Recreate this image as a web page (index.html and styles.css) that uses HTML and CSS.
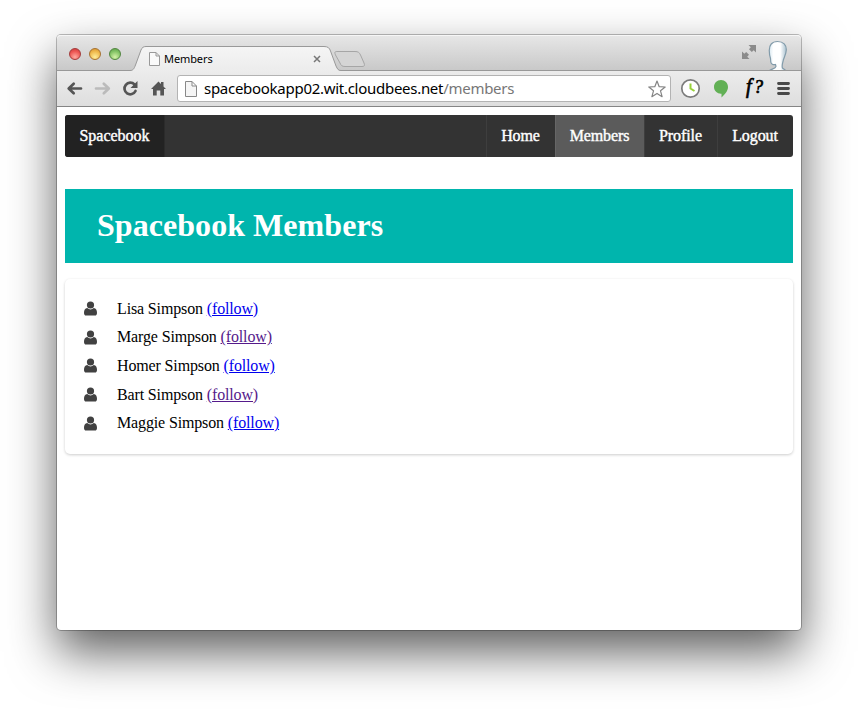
FILE: index.html
```html
<!DOCTYPE html>
<html lang="en">
<head>
<meta charset="utf-8">
<title>Members</title>
<link rel="stylesheet" href="styles.css">
</head>
<body>
<div class="window">
  <header class="tabstrip">
    <div class="lights"><i class="light red"></i><i class="light amber"></i><i class="light green"></i></div>
    <div class="tab">
      <svg class="tab-shape" width="250" height="36" viewBox="0 0 250 36">
        <defs><linearGradient id="tabfill" x1="0" y1="0" x2="0" y2="1"><stop offset="0" stop-color="#f5f5f5"/><stop offset="1" stop-color="#ececec"/></linearGradient></defs>
        <path d="M0 36V35.500H1C4 35.500 5 34 6.500 30L12 15C13 12.500 14.500 11.500 17 11.500H195C199 11.500 200.500 13 201.500 16L207 31C208.500 34 209 35.500 212 35.500V36Z" fill="url(#tabfill)"/>
        <path d="M0 35.500H1C4 35.500 5 34 6.500 30L12 15C13 12.500 14.500 11.500 17 11.500H195C199 11.500 200.500 13 201.500 16L207 31C208.500 34 209 35.500 212 35.500" fill="none" stroke="#999"/>
        <path d="M208 16.500H226C229 16.500 230.500 17.500 231.500 20L235 28C236 30.500 235.500 31.500 233 31.500H216C213 31.500 212 30.500 211 28L206.500 20C205.500 17.500 205.500 16.500 208 16.500Z" fill="#d5d5d5" stroke="#a6a6a6"/>
      </svg>
      <svg class="tab-page" width="12" height="15" viewBox="0 0 12 15"><path d="M.5.5H7L10.500 4V13.500H.5ZM7 .5V4H10.500" fill="#fafafa" stroke="#999"/></svg>
      <span class="tab-title">Members</span>
      <svg class="tab-close" width="8" height="8" viewBox="0 0 8 8"><path d="M1 1L7 7M7 1L1 7" stroke="#777" stroke-width="1.500"/></svg>
    </div>
    <div class="strip-end">
      <svg class="expand" width="16" height="16" viewBox="0 0 16 16" fill="#8b8b8b"><path d="M7.500 1H15V8.500L12.700 6.200L10.800 8L8 5.200L9.800 3.300ZM1 7.500L3.300 9.800L5.200 8L8 10.800L6.200 12.700L8.500 15H1Z"/></svg>
      <svg class="avatar" width="22" height="30" viewBox="0 0 22 30">
        <defs><linearGradient id="face"><stop offset="0" stop-color="#d8e8f1"/><stop offset=".25" stop-color="#fff"/><stop offset=".65" stop-color="#fff"/><stop offset="1" stop-color="#a9c1cf"/></linearGradient></defs>
        <path d="M2 31C3.500 29 8.500 29 9 26.500L8.500 24.500C6 25 4 24 3.800 22L3.500 18.500C2.700 16 2.300 14 2.300 11C2 5 5 1.500 10.500 1.500C16.500 1.500 19.500 5 19.300 10C19 14.500 17.500 16.500 16.500 19.500C15.500 23 14.500 26 15.500 28C16.500 29 18 29.500 19 31Z" fill="url(#face)" stroke="#829baa" stroke-width="1.200"/>
      </svg>
    </div>
  </header>
  <div class="toolbar">
    <svg class="tools" width="120" height="35" viewBox="0 0 120 35" fill="none" stroke-linecap="round" stroke-linejoin="round">
      <path d="M24 17.500H12.500M16.700 12.700L11.700 17.500L16.700 22.300" stroke="#555" stroke-width="2.700"/>
      <path d="M39 17.500H51M46.800 12.700L51.800 17.500L46.800 22.300" stroke="#bbb" stroke-width="2.700"/>
      <path d="M77.500 13.500A5.800 5.800 0 1 0 78.500 20" stroke="#555" stroke-width="2.700"/><path d="M80.500 10V17H73.500Z" fill="#555"/>
      <path d="M94 18L101.500 10.500L104 13V11H106.500V15.500L109 18H107V24.500H103.300V19.500H99.700V24.500H96V18Z" fill="#555"/>
    </svg>
    <div class="address">
      <svg class="page-icon" width="12" height="16" viewBox="0 0 12 16"><path d="M.5.5H7L11.500 5V15.500H.5ZM7 .5V5H11.500" fill="#f5f5f5" stroke="#888"/></svg>
      <span class="url">spacebookapp02.wit.cloudbees.net<span class="path">/members</span></span>
      <svg class="star" width="18" height="18" viewBox="0 0 18 18"><path d="M9 1L11.200 6.700L17.200 7L12.500 10.800L14.100 16.700L9 13.400L3.900 16.700L5.500 10.800L.8 7L6.800 6.700Z" fill="#fff" stroke="#858585" stroke-width="1.200" stroke-linejoin="round"/></svg>
    </div>
    <svg class="extensions" width="130" height="35" viewBox="0 0 130 35">
      <circle cx="19.500" cy="17.500" r="8.700" fill="#fff" stroke="#7b7b7b" stroke-width="1.700"/><path d="M19.500 12.500V17.500L23.500 20" fill="none" stroke="#98d13b" stroke-width="2"/>
      <path d="M50 9C54 9 57 12 57 16C57 20 54 23 50.500 26.500V22.700C46.500 23 43 20 43 16C43 12 46 9 50 9Z" fill="#62b055"/>
      <text x="75" y="22" class="func">f<tspan dx="2.500">?</tspan></text>
      <path d="M107.500 12.500H117.500M107.500 17.500H117.500M107.500 22.500H117.500" stroke="#494949" stroke-width="2.800" stroke-linecap="round"/>
    </svg>
  </div>
  <main class="page">
    <nav class="menu">
      <a class="brand">Spacebook</a>
      <a class="item">Home</a><a class="item active">Members</a><a class="item">Profile</a><a class="item last">Logout</a>
    </nav>
    <h1><span>Spacebook Members</span></h1>
    <section class="card">
      <ul>
        <li><svg class="user" width="14" height="15" viewBox="0 0 14 15"><use href="#person"/></svg><span>Lisa Simpson <a>(follow)</a></span></li>
        <li><svg class="user" width="14" height="15" viewBox="0 0 14 15"><use href="#person"/></svg><span>Marge Simpson <a class="visited">(follow)</a></span></li>
        <li><svg class="user" width="14" height="15" viewBox="0 0 14 15"><use href="#person"/></svg><span>Homer Simpson <a>(follow)</a></span></li>
        <li><svg class="user" width="14" height="15" viewBox="0 0 14 15"><use href="#person"/></svg><span>Bart Simpson <a class="visited">(follow)</a></span></li>
        <li><svg class="user" width="14" height="15" viewBox="0 0 14 15"><use href="#person"/></svg><span>Maggie Simpson <a>(follow)</a></span></li>
      </ul>
    </section>
  </main>
</div>
<svg class="symbols" width="0" height="0"><defs><g id="person"><circle cx="6.500" cy="4" r="3.600"/><path d="M3.200 7Q6.500 9.800 9.800 7C12 7.500 13 9.200 13 11.700Q13 14.500 11 14.500H2Q0 14.500 0 11.700C0 9.200 1 7.500 3.200 7Z"/></g></defs></svg>
</body>
</html>
```
FILE: styles.css
```css
* { box-sizing: border-box; }
html, body { height: 100%; overflow: hidden; }
body { margin: 0; padding: 35px 57px; background: #fff; font: 16px "Liberation Serif", serif; }
svg { display: block; flex: none; }
.symbols { position: absolute; }
.window { width: 744px; height: 595px; background: #fff; border-radius: 4px; box-shadow: 0 0 0 1px rgba(0,0,0,.25), 0 22px 48px rgba(0,0,0,.63); }
.tabstrip { display: flex; height: 36px; background: linear-gradient(#e7e7e7, #c8c8c8); border-radius: 4px 4px 0 0; box-shadow: inset 0 1px #f6f6f6, inset 0 -1px #999; }
.lights { display: flex; gap: 8px; padding: 13px 0 0 12px; width: 72px; }
.light { width: 12px; height: 12px; border-radius: 50%; border: 1px solid; }
.red { background: radial-gradient(circle at 50% 80%, #ffaaa0, #ed5653 60%, #c73639); border-color: #a43b3b; }
.amber { background: radial-gradient(circle at 50% 80%, #ffed99, #efb84b 60%, #d28e2b); border-color: #a77230; }
.green { background: radial-gradient(circle at 50% 80%, #d5f3a8, #83c365 60%, #569c45); border-color: #52863f; }
.tab { position: relative; display: flex; align-items: center; width: 250px; height: 36px; padding: 12px 0 0 20px; }
.tab-shape { position: absolute; left: 0; top: 0; }
.tab-page, .tab-title, .tab-close { position: relative; }
.tab-title { margin-left: 3px; width: 149px; font: 11px/16px "Noto Sans", sans-serif; letter-spacing: -.1px; color: #000; }
.strip-end { display: flex; margin-left: auto; padding: 9px 12px 0 0; gap: 10px; }
.avatar { margin-top: -4px; }
.toolbar { display: flex; align-items: center; height: 36px; background: linear-gradient(#ececec, #dedede); border-bottom: 1px solid #858585; }
.address { display: flex; align-items: center; width: 494px; height: 27px; padding: 0 4px 0 7px; background: #fff; border: 1px solid #b3b3b3; border-radius: 3px; }
.url { margin: 0 0 2px 7px; font: 15px/20px "Noto Sans", sans-serif; letter-spacing: -.28px; white-space: nowrap; }
.path { color: #777; }
.star { margin-left: auto; }
.func { font: italic 20px "Liberation Serif", serif; stroke: #000; stroke-width: .7px; }
.func tspan { font-size: 18px; }
.page { padding: 8px; }
.menu { display: flex; height: 42px; background: #333; border-radius: 3px; color: #fff; overflow: hidden; line-height: 42px; text-align: center; letter-spacing: -.1px; -webkit-text-stroke: .4px #fff; }
.brand { width: 100px; margin-right: auto; background: #222; border-right: 1px solid #2b2b2b; letter-spacing: 0; }
.item { width: 73px; padding-right: 1px; border-left: 1px solid #3e3e3e; }
.item:nth-child(2) { width: 69px; }
.active { width: 89px; background: #5b5b5b; border-color: #666; }
.last { width: 76px; }
h1 { display: flex; align-items: center; margin: 32px 0 16px; height: 74px; padding: 0 32px 1px; background: #00b5ad; color: #fff; font-size: 32px; letter-spacing: .05px; }
.card { height: 175px; padding: 15.5px 19px; border-radius: 5px; background: #fff; box-shadow: 0 1px 3px rgba(0,0,0,.2); }
ul { margin: 0; padding: 0; list-style: none; }
li { display: flex; align-items: center; height: 28.6px; gap: 19px; letter-spacing: -.14px; }
.user { fill: #414141; }
li a { color: #00e; text-decoration: underline; }
li .visited { color: #551a8b; }
```
